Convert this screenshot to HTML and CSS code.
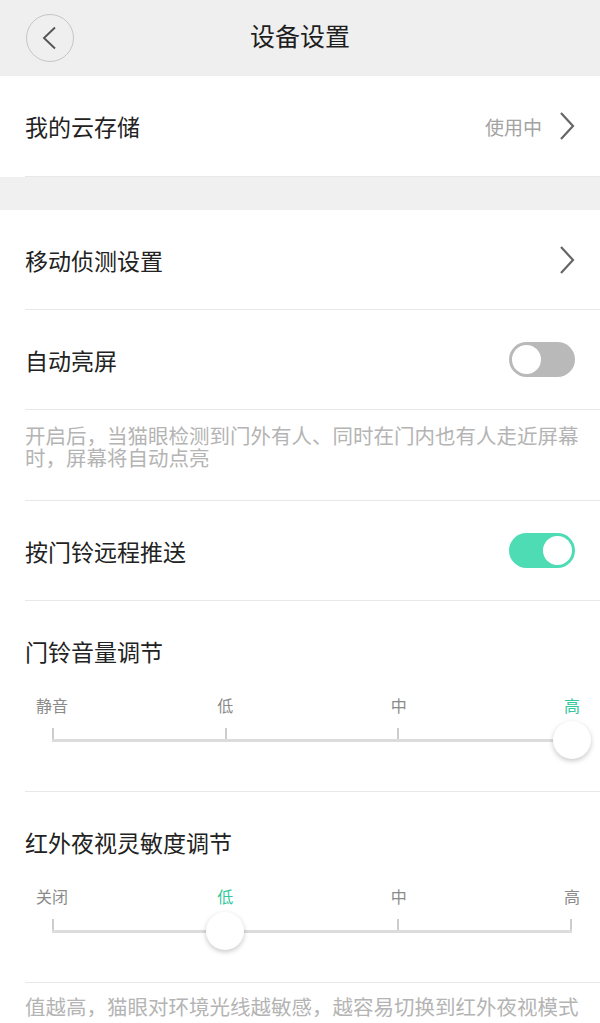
FILE: index.html
```html
<!DOCTYPE html>
<html lang="zh-CN">
<head>
    <meta charset="UTF-8">
    <title>设备设置</title>
    <link rel="stylesheet" href="styles.css">
</head>
<body>
<div class="header">
    <a class="back" href="#">
        <svg width="16" height="24" viewBox="0 0 16 24"><polyline points="14,1.5 3,12 14,22.5" fill="none" stroke="#555" stroke-width="1.9" stroke-linejoin="miter"/></svg>
    </a>
    <h1 class="title">设备设置</h1>
    <span></span>
</div>

<div class="group">
    <div class="row first">
        <span class="label">我的云存储</span>
        <span class="right">
            <span class="value">使用中</span>
            <svg class="arrow" width="16" height="30" viewBox="0 0 16 30"><polyline points="2,2 14,15 2,28" fill="none" stroke="#666" stroke-width="2.2"/></svg>
        </span>
    </div>
</div>

<div class="gap"></div>

<div class="group">
    <div class="row">
        <span class="label">移动侦测设置</span>
        <span class="right">
            <svg class="arrow" width="16" height="30" viewBox="0 0 16 30"><polyline points="2,2 14,15 2,28" fill="none" stroke="#666" stroke-width="2.2"/></svg>
        </span>
    </div>
    <div class="row">
        <span class="label">自动亮屏</span>
        <span class="switch"><i></i></span>
    </div>
    <p class="desc">开启后，当猫眼检测到门外有人、同时在门内也有人走近屏幕时，屏幕将自动点亮</p>
    <div class="row">
        <span class="label">按门铃远程推送</span>
        <span class="switch on"><i></i></span>
    </div>

    <div class="section">
        <div class="section-title">门铃音量调节</div>
        <div class="slider">
            <div class="stops">
                <span class="stop"><em>静音</em></span>
                <span class="stop"><em>低</em></span>
                <span class="stop"><em>中</em></span>
                <span class="stop active"><em>高</em></span>
            </div>
            <div class="track">
                <i class="tick"></i><i class="tick"></i><i class="tick"></i><i class="tick"></i>
                <span class="thumb" style="left: 100%"></span>
            </div>
        </div>
    </div>

    <div class="section">
        <div class="section-title">红外夜视灵敏度调节</div>
        <div class="slider">
            <div class="stops">
                <span class="stop"><em>关闭</em></span>
                <span class="stop active"><em>低</em></span>
                <span class="stop"><em>中</em></span>
                <span class="stop"><em>高</em></span>
            </div>
            <div class="track">
                <i class="tick"></i><i class="tick"></i><i class="tick"></i><i class="tick"></i>
                <span class="thumb" style="left: 33.333%"></span>
            </div>
        </div>
    </div>
    <p class="desc last">值越高，猫眼对环境光线越敏感，越容易切换到红外夜视模式</p>
</div>
</body>
</html>
```

FILE: styles.css
```css
body {
    margin: 0;
    background-color: #ffffff;
    color: #222222;
    font-family: "Noto Sans CJK SC", "Noto Sans", sans-serif;
    overflow: hidden;
}

.header {
    height: 76px;
    background-color: #efefef;
    display: grid;
    grid-template-columns: 1fr auto 1fr;
    align-items: center;
}
.back {
    margin-left: 26px;
    width: 46px;
    height: 46px;
    border: 1.5px solid #c6c6c6;
    border-radius: 50%;
    display: flex;
    align-items: center;
    justify-content: center;
}
.back svg {
    margin-left: -3px;
}
.title {
    margin: 0;
    padding-bottom: 7px;
    font-size: 25px;
    font-weight: normal;
    line-height: 30px;
    color: #1e1e1e;
}

.group {
    background-color: #ffffff;
}
.gap {
    height: 33px;
    background-color: #f0f0f0;
}

.row {
    height: 99px;
    margin-left: 25px;
    padding-right: 25px;
    border-bottom: 1px solid #e8e8e8;
    display: flex;
    align-items: center;
    justify-content: space-between;
}
.row.first {
    height: 100px;
}
.label {
    font-size: 23px;
    line-height: 30px;
}
.right {
    display: flex;
    align-items: center;
}
.value {
    font-size: 19px;
    color: #a3a3a3;
    margin-right: 17px;
}

.switch {
    width: 66px;
    height: 35px;
    border-radius: 18px;
    background-color: #b9b9b9;
    display: flex;
    align-items: center;
    padding: 0 3px;
    box-sizing: border-box;
}
.switch i {
    width: 29px;
    height: 29px;
    border-radius: 50%;
    background-color: #ffffff;
}
.switch.on {
    background-color: #4edcb5;
    justify-content: flex-end;
}

.desc {
    margin: 0 0 0 25px;
    padding: 14px 5px 32px 0;
    font-size: 20.5px;
    line-height: 22px;
    color: #b4b4b4;
    border-bottom: 1px solid #e8e8e8;
}
.desc.last {
    white-space: nowrap;
    border-bottom: none;
    padding-top: 12px;
}

.section {
    margin-left: 25px;
    padding: 35px 0 49px;
    border-bottom: 1px solid #e8e8e8;
}
.section-title {
    font-size: 23px;
    line-height: 30px;
}
.slider {
    margin: 29px 28px 0 27px;
}
.stops {
    display: flex;
    justify-content: space-between;
    height: 20px;
    margin-bottom: 13px;
}
.stop {
    width: 0;
    display: flex;
    justify-content: center;
    white-space: nowrap;
}
.stop em {
    font-style: normal;
    font-size: 16px;
    line-height: 20px;
    color: #8a8a8a;
}
.stop.active em {
    color: #33c79d;
}
.track {
    position: relative;
    height: 11px;
    border-bottom: 3px solid #dcdcdc;
    display: flex;
    justify-content: space-between;
    align-items: flex-end;
}
.tick {
    width: 2px;
    height: 11px;
    background-color: #cdcdcd;
}
.thumb {
    position: absolute;
    top: calc(100% + 1px);
    width: 38px;
    height: 38px;
    border-radius: 50%;
    background-color: #ffffff;
    box-shadow: 0 2px 5px rgba(0, 0, 0, 0.22);
    transform: translate(-50%, -50%);
}
```
